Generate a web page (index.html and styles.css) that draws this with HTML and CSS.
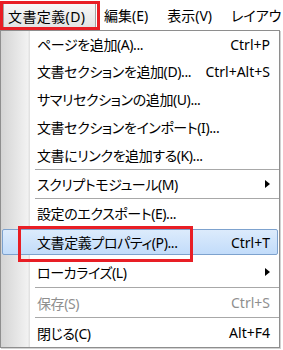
FILE: index.html
```html
<!DOCTYPE html>
<html lang="ja">
<head>
  <meta charset="UTF-8">
  <title>文書定義メニュー</title>
  <link rel="stylesheet" href="styles.css">
</head>
<body>
<div class="menubar">
  <span class="top-item pressed">文書定義(D)</span>
  <span class="top-item">編集(E)</span>
  <span class="top-item">表示(V)</span>
  <span class="top-item">レイアウト</span>
  <span class="mark mark-top"></span>
</div>

<div class="dropdown">
  <div class="item first"><span class="label">ページを追加(A)...</span><span class="key">Ctrl+P</span></div>
  <div class="item"><span class="label">文書セクションを追加(D)...</span><span class="key">Ctrl+Alt+S</span></div>
  <div class="item"><span class="label">サマリセクションの追加(U)...</span></div>
  <div class="item"><span class="label">文書セクションをインポート(I)...</span></div>
  <div class="item"><span class="label">文書にリンクを追加する(K)...</span></div>
  <div class="sep"></div>
  <div class="item"><span class="label">スクリプトモジュール(M)</span><span class="arrow"></span></div>
  <div class="sep"></div>
  <div class="item"><span class="label">設定のエクスポート(E)...</span></div>
  <div class="item hl"><span class="label">文書定義プロパティ(P)...</span><span class="key">Ctrl+T</span><span class="mark mark-item"></span></div>
  <div class="item tall"><span class="label">ローカライズ(L)</span><span class="arrow"></span></div>
  <div class="sep"></div>
  <div class="item mid disabled"><span class="label">保存(S)</span><span class="key">Ctrl+S</span></div>
  <div class="sep"></div>
  <div class="item mid"><span class="label">閉じる(C)</span><span class="key">Alt+F4</span></div>
</div>
</body>
</html>
```

FILE: styles.css
```css
body {
  margin: 0;
  width: 283px;
  height: 350px;
  overflow: hidden;
  background: #fff;
  font-family: "Noto Sans", "Noto Sans CJK JP", sans-serif;
  font-size: 14px;
  font-feature-settings: "palt";
  color: #000;
}

/* menu bar */
.menubar {
  position: relative;
  display: flex;
  height: 30px;
  padding-top: 3px;
  box-sizing: border-box;
  overflow: hidden;
  white-space: nowrap;
}
.top-item {
  flex-shrink: 0;
  display: flex;
  align-items: center;
  height: 26px;
  box-sizing: border-box;
  padding: 0 11px 2px 8px;
}
.top-item.pressed {
  width: 93px;
  margin-left: 3px;
  padding: 0 0 2px 4px;
  border: 1px solid #a3a3a3;
  border-bottom: none;
  background: linear-gradient(#f7f7f7, #e2e2e2);
  letter-spacing: 0.4px;
}

/* red annotation boxes */
.mark {
  position: absolute;
  box-sizing: border-box;
  border: 3px solid #e81e25;
}
.mark-top {
  left: 0;
  top: 1px;
  width: 100px;
  height: 29px;
}
.mark-item {
  left: 15px;
  top: -4px;
  width: 175px;
  height: 36px;
}

/* dropdown */
.dropdown {
  width: 280px;
  box-sizing: border-box;
  border: 1px solid #8e8e8e;
  box-shadow: 1px 1px 0 #d2d2d2;
  background: linear-gradient(to right, #d4d4d4, #f2f2f2 27px, #e2e2e2 28px, #e2e2e2 29px, #fff 29px);
  white-space: nowrap;
}
.item {
  position: relative;
  display: flex;
  align-items: center;
  height: 28px;
  box-sizing: border-box;
  padding: 0 9px 0 36px;
}
.item.first { height: 26px; }
.item.mid { height: 29px; }
.item.tall { height: 30px; }
.item.hl {
  height: 26px;
  margin: 2px 1px;
  padding: 0 7px 0 34px;
  border: 1px solid #7da2ce;
  border-radius: 2px;
  background: linear-gradient(#dcebfc, #c2dcfa);
}
.label {
  flex: 1;
  letter-spacing: -0.4px;
}
.disabled { color: #8f8f8f; }
.sep {
  height: 1px;
  margin-left: 34px;
  background: #a8a8a8;
}
.arrow {
  width: 0;
  height: 0;
  border-left: 5px solid #000;
  border-top: 4.5px solid transparent;
  border-bottom: 4.5px solid transparent;
}
```
